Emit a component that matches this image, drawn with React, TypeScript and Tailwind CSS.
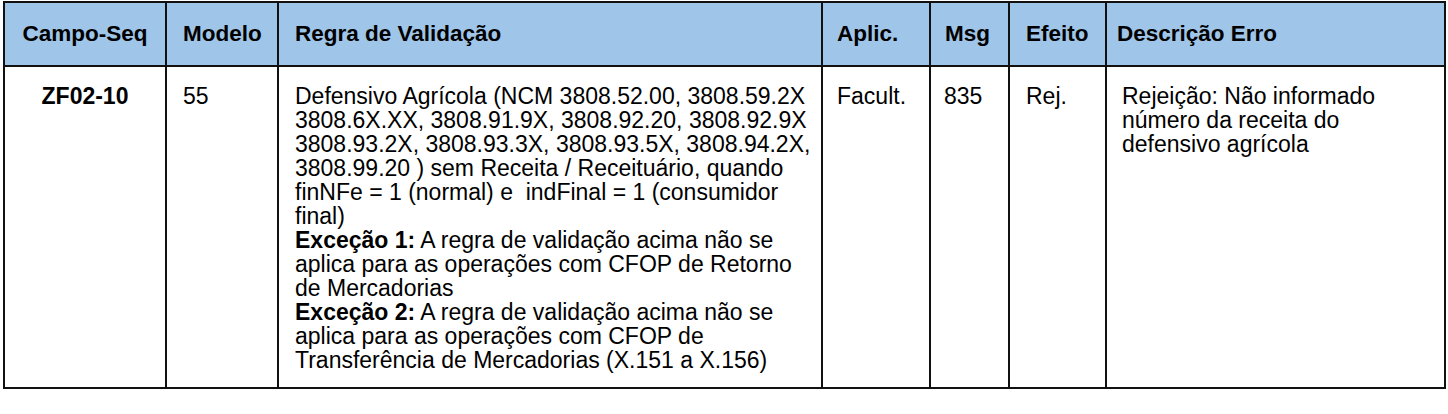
const headers = [
  { label: "Campo-Seq", className: "w-[162px] text-center" },
  { label: "Modelo", className: "w-[112px] text-left pl-4" },
  { label: "Regra de Validação", className: "w-[544px] text-left pl-4" },
  { label: "Aplic.", className: "w-[108px] text-left pl-[14px]" },
  { label: "Msg", className: "w-[79px] text-left pl-[14px]" },
  { label: "Efeito", className: "w-[97px] text-left pl-4" },
  { label: "Descrição Erro", className: "text-left pl-[10px]" },
];

const cell = "border-2 border-[#111] pt-[17px] text-[23px] leading-[24px]";

export default function App() {
  return (
    <div className="min-h-screen bg-white pt-px pl-[3px] font-['Liberation_Sans',Arial,sans-serif] text-black">
      <table className="w-[1443px] table-fixed border-collapse border-2 border-[#111]">
        <thead>
          <tr className="h-[64px] bg-[#9fc5e8]">
            {headers.map((h) => (
              <th
                key={h.label}
                className={`border-2 border-[#111] align-middle text-[22.5px] leading-[24px] font-bold ${h.className}`}
              >
                {h.label}
              </th>
            ))}
          </tr>
        </thead>
        <tbody>
          <tr className="align-top">
            <td className={`${cell} text-center font-bold`}>ZF02-10</td>
            <td className={`${cell} pl-4`}>55</td>
            <td className={`${cell} pl-4 pr-2 pb-[15px]`}>
              <p className="leading-[24px]">
                Defensivo Agrícola (NCM 3808.52.00, 3808.59.2X 3808.6X.XX, 3808.91.9X,
                3808.92.20, 3808.92.9X 3808.93.2X, 3808.93.3X, 3808.93.5X, 3808.94.2X,
                3808.99.20 ) sem Receita / Receituário, quando finNFe = 1 (normal) e&nbsp;
                indFinal = 1 (consumidor final)
              </p>
              <p className="leading-[24px]">
                <span className="font-bold">Exceção 1:</span> A regra de validação acima não se
                aplica para as operações com CFOP de Retorno de Mercadorias
              </p>
              <p className="leading-[24px]">
                <span className="font-bold">Exceção 2:</span> A regra de validação acima não se
                aplica para as operações com CFOP de Transferência de Mercadorias (X.151 a X.156)
              </p>
            </td>
            <td className={`${cell} pl-[14px]`}>Facult.</td>
            <td className={`${cell} pl-[13px]`}>835</td>
            <td className={`${cell} pl-4`}>Rej.</td>
            <td className={`${cell} pl-[15px] pr-4`}>
              Rejeição: Não informado número da receita do defensivo agrícola
            </td>
          </tr>
        </tbody>
      </table>
    </div>
  );
}
